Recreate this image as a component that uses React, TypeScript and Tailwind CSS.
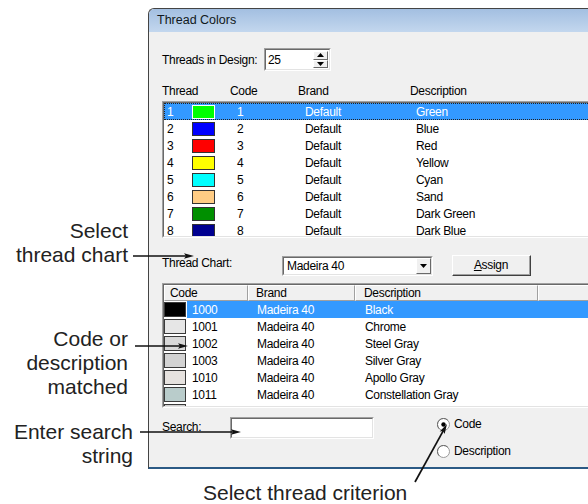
import React from "react";

type TopRow = { n: string; color: string; desc: string };
const topRows: TopRow[] = [
  { n: "1", color: "#00ff00", desc: "Green" },
  { n: "2", color: "#0000ff", desc: "Blue" },
  { n: "3", color: "#ff0000", desc: "Red" },
  { n: "4", color: "#ffff00", desc: "Yellow" },
  { n: "5", color: "#00ffff", desc: "Cyan" },
  { n: "6", color: "#ffcc84", desc: "Sand" },
  { n: "7", color: "#008f00", desc: "Dark Green" },
  { n: "8", color: "#000090", desc: "Dark Blue" },
];

type ChartRow = { code: string; color: string; desc: string };
const chartRows: ChartRow[] = [
  { code: "1000", color: "#000000", desc: "Black" },
  { code: "1001", color: "#e6e6e6", desc: "Chrome" },
  { code: "1002", color: "#d8d8d8", desc: "Steel Gray" },
  { code: "1003", color: "#d3d3d3", desc: "Silver Gray" },
  { code: "1010", color: "#e6e2df", desc: "Apollo Gray" },
  { code: "1011", color: "#b9cccb", desc: "Constellation Gray" },
  { code: "1012", color: "#cfcfcf", desc: "Lilac Silver" },
];

function Arrow({ x1, y1, x2, y2 }: { x1: number; y1: number; x2: number; y2: number }) {
  const dx = x2 - x1;
  const dy = y2 - y1;
  const len = Math.sqrt(dx * dx + dy * dy);
  const ux = dx / len;
  const uy = dy / len;
  const hl = 10;
  const hw = 2.8;
  const bx = x2 - ux * hl;
  const by = y2 - uy * hl;
  const px = -uy;
  const py = ux;
  const pts = `${x2},${y2} ${bx + px * hw},${by + py * hw} ${bx + ux * 2},${by + uy * 2} ${bx - px * hw},${by - py * hw}`;
  return (
    <g>
      <line x1={x1} y1={y1} x2={bx + ux * 3} y2={by + uy * 3} stroke="#111" strokeWidth="1.7" />
      <polygon points={pts} fill="#111" />
    </g>
  );
}

function Radio({ checked }: { checked?: boolean }) {
  return (
    <svg width="13" height="13" viewBox="0 0 13 13" className="shrink-0">
      <circle cx="6.5" cy="6.5" r="6" fill="#ffffff" stroke="#9a9a9a" strokeWidth="1" />
      <path d="M2.2 10.8 A6 6 0 0 1 10.8 2.2" fill="none" stroke="#6b6b6b" strokeWidth="1" />
      {checked && <circle cx="6.5" cy="6.5" r="2.2" fill="#000" />}
    </svg>
  );
}

function Sunken({ className, children }: { className?: string; children?: React.ReactNode }) {
  return (
    <div className={`border-t border-l border-[#a0a0a0] border-b border-r border-b-white border-r-white ${className ?? ""}`}>
      <div className="w-full h-full border-t border-l border-[#696969] border-b border-r border-b-[#e3e3e3] border-r-[#e3e3e3] overflow-hidden bg-white">
        {children}
      </div>
    </div>
  );
}

function Window() {
  return (
    <div className="w-[460px] h-[461px] flex flex-col border-l border-t border-[#444] border-b-2 border-b-[#2b5a85] rounded-tl-[6px] bg-[#f0f0f0] overflow-hidden">
      <div className="h-[23px] shrink-0 bg-gradient-to-b from-[#a3bfe1] to-[#c3d7ee] flex items-center pl-[8px] text-[12.5px] text-[#101820] rounded-tl-[5px]">
        Thread Colors
      </div>
      <div className="flex-1 flex flex-col pl-[13px] text-[12px] leading-[14px] tracking-[-0.3px] text-black">
        {/* spin row */}
        <div className="mt-[16px] flex items-center h-[23px]">
          <div className="w-[102px]">Threads in Design:</div>
          <Sunken className="w-[67px] h-[23px]">
            <div className="flex h-full">
              <div className="flex-1 pl-[2px] flex items-center">25</div>
              <div className="w-[15px] flex flex-col mr-[1px] my-[1px]">
                <div className="flex-1 bg-[#f0f0f0] border-t border-l border-white border-b border-r border-b-[#696969] border-r-[#696969] flex items-center justify-center">
                  <svg width="7" height="4" viewBox="0 0 7 4"><polygon points="3.5,0 7,4 0,4" fill="#000" /></svg>
                </div>
                <div className="flex-1 bg-[#f0f0f0] border-t border-l border-white border-b border-r border-b-[#696969] border-r-[#696969] flex items-center justify-center">
                  <svg width="7" height="4" viewBox="0 0 7 4"><polygon points="0,0 7,0 3.5,4" fill="#000" /></svg>
                </div>
              </div>
            </div>
          </Sunken>
        </div>

        {/* header labels */}
        <div className="mt-[13px] flex h-[14px]">
          <div className="w-[68px]">Thread</div>
          <div className="w-[68px]">Code</div>
          <div className="w-[112px]">Brand</div>
          <div>Description</div>
        </div>

        {/* top list */}
        <Sunken className="mt-[3px] h-[137px]">
          <div className="flex flex-col">
            {topRows.map((r, i) => {
              const sel = i === 0;
              return (
                <div
                  key={r.n}
                  className={`h-[17px] shrink-0 flex items-center ${sel ? "bg-[#3399ff] text-white outline-1 outline-dotted outline-[#222] -outline-offset-1" : ""}`}
                >
                  <div className="w-[28px] pl-[3px]">{r.n}</div>
                  <div
                    className={`w-[23px] h-[14px] border ${sel ? "border-white" : "border-[#333]"}`}
                    style={{ backgroundColor: r.color }}
                  />
                  <div className="w-[90px] pl-[22px]">{r.n}</div>
                  <div className="w-[111px]">Default</div>
                  <div>{r.desc}</div>
                </div>
              );
            })}
          </div>
        </Sunken>

        {/* thread chart row */}
        <div className="mt-[17px] flex items-start h-[21px]">
          <div className="w-[120px] mt-[1px]">Thread Chart:</div>
          <Sunken className="w-[151px] h-[20px] mt-[1px]">
            <div className="flex h-full">
              <div className="flex-1 pl-[3px] flex items-center">Madeira 40</div>
              <div className="w-[15px] bg-[#f0f0f0] border-t border-l border-white border-b border-r border-b-[#696969] border-r-[#696969] flex items-center justify-center">
                <svg width="7" height="4" viewBox="0 0 7 4"><polygon points="0,0 7,0 3.5,4" fill="#000" /></svg>
              </div>
            </div>
          </Sunken>
          <div className="ml-[19px] w-[79px] h-[21px] border-t border-l border-white border-b border-r border-b-[#404040] border-r-[#404040] bg-[#f0f0f0]">
            <div className="w-full h-full border-b border-r border-b-[#a0a0a0] border-r-[#a0a0a0] flex items-center justify-center">
              <span><span className="underline">A</span>ssign</span>
            </div>
          </div>
        </div>

        {/* chart list */}
        <Sunken className="mt-[7px] h-[125px]">
          <div className="flex flex-col">
            <div className="h-[16px] shrink-0 flex bg-[#f0f0f0]">
              <div className="w-[84px] border-t border-l border-white border-r border-b border-r-[#a0a0a0] border-b-[#a0a0a0] pl-[5px] leading-[14px]">Code</div>
              <div className="w-[107px] border-t border-l border-white border-r border-b border-r-[#a0a0a0] border-b-[#a0a0a0] pl-[7px] leading-[14px]">Brand</div>
              <div className="w-[183px] border-t border-l border-white border-r border-b border-r-[#a0a0a0] border-b-[#a0a0a0] pl-[8px] leading-[14px]">Description</div>
              <div className="flex-1 border-t border-l border-white border-b border-b-[#a0a0a0]" />
            </div>
            {chartRows.map((r, i) => {
              const sel = i === 0;
              return (
                <div key={r.code} className="h-[17px] shrink-0 flex items-center">
                  <div className="w-[23px] h-full flex items-center">
                    <div className="w-[22px] h-[15px] border border-[#3a3a3a]" style={{ backgroundColor: r.color }} />
                  </div>
                  <div className={`flex-1 h-full flex items-center ${sel ? "bg-[#3399ff] text-white" : ""}`}>
                    <div className="w-[65px] pl-[5px]">{r.code}</div>
                    <div className="w-[108px] pl-[5px]">Madeira 40</div>
                    <div className="pl-[5px]">{r.desc}</div>
                  </div>
                </div>
              );
            })}
          </div>
        </Sunken>

        {/* search row */}
        <div className="mt-[9px] flex items-start">
          <div className="w-[68px] mt-[3px]">Search:</div>
          <Sunken className="w-[144px] h-[22px]" />
          <div className="ml-[63px] flex flex-col gap-[13px]">
            <div className="flex items-center h-[14px] gap-[4px]">
              <Radio checked />
              <span>Code</span>
            </div>
            <div className="flex items-center h-[14px] gap-[4px]">
              <Radio />
              <span>Description</span>
            </div>
          </div>
        </div>
      </div>
    </div>
  );
}

export default function App() {
  return (
    <div className="relative w-[588px] h-[504px] overflow-hidden bg-white font-['Liberation_Sans',Arial,Helvetica,sans-serif]">
      <div className="pl-[148px] pt-[8px]">
        <Window />
      </div>

      <div className="absolute left-0 top-[219px] w-[128px] text-right text-[21px] leading-[24px] text-[#222]">
        <div>Select</div>
        <div>thread chart</div>
      </div>
      <div className="absolute left-0 top-[327px] w-[128px] text-right text-[21px] leading-[24px] text-[#222]">
        <div>Code or</div>
        <div>description</div>
        <div>matched</div>
      </div>
      <div className="absolute left-0 top-[420px] w-[133px] text-right text-[21px] leading-[24px] text-[#222]">
        <div>Enter search</div>
        <div>string</div>
      </div>
      <div className="absolute left-[203px] top-[481px] text-[21px] leading-[24px] text-[#222]">
        Select thread criterion
      </div>

      <svg className="absolute left-0 top-0 pointer-events-none" width="588" height="504">
        <Arrow x1={133} y1={256} x2={194} y2={256} />
        <Arrow x1={135} y1={346} x2={188} y2={346} />
        <Arrow x1={140} y1={432} x2={241} y2={432} />
        <Arrow x1={415} y1={482} x2={447} y2={424} />
      </svg>
    </div>
  );
}
